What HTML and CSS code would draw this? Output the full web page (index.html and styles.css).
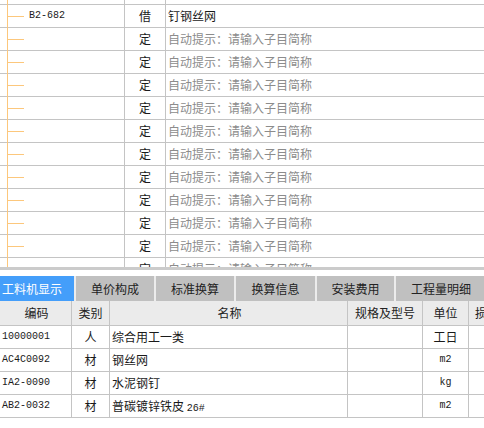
FILE: index.html
```html
<!DOCTYPE html>
<html lang="zh-CN">
  <head>
    <meta charset="UTF-8" />
    <title>工料机显示</title>
    <link rel="stylesheet" href="styles.css">
  </head>
  <body>
    <div class="tree-grid">
      <div class="tree-line"></div>
      <div class="rows">
        <div class="row">
          <div class="c-code"></div>
          <div class="c-type"></div>
          <div class="c-name"></div>
        </div>
        <div class="row">
          <div class="c-code"><span class="branch"></span><span class="mono">B2-682</span></div>
          <div class="c-type">借</div>
          <div class="c-name">钉钢丝网</div>
        </div>
        <div class="row">
          <div class="c-code"><span class="branch"></span></div>
          <div class="c-type">定</div>
          <div class="c-name hint">自动提示：请输入子目简称</div>
        </div>
        <div class="row">
          <div class="c-code"><span class="branch"></span></div>
          <div class="c-type">定</div>
          <div class="c-name hint">自动提示：请输入子目简称</div>
        </div>
        <div class="row">
          <div class="c-code"><span class="branch"></span></div>
          <div class="c-type">定</div>
          <div class="c-name hint">自动提示：请输入子目简称</div>
        </div>
        <div class="row">
          <div class="c-code"><span class="branch"></span></div>
          <div class="c-type">定</div>
          <div class="c-name hint">自动提示：请输入子目简称</div>
        </div>
        <div class="row">
          <div class="c-code"><span class="branch"></span></div>
          <div class="c-type">定</div>
          <div class="c-name hint">自动提示：请输入子目简称</div>
        </div>
        <div class="row">
          <div class="c-code"><span class="branch"></span></div>
          <div class="c-type">定</div>
          <div class="c-name hint">自动提示：请输入子目简称</div>
        </div>
        <div class="row">
          <div class="c-code"><span class="branch"></span></div>
          <div class="c-type">定</div>
          <div class="c-name hint">自动提示：请输入子目简称</div>
        </div>
        <div class="row">
          <div class="c-code"><span class="branch"></span></div>
          <div class="c-type">定</div>
          <div class="c-name hint">自动提示：请输入子目简称</div>
        </div>
        <div class="row">
          <div class="c-code"><span class="branch"></span></div>
          <div class="c-type">定</div>
          <div class="c-name hint">自动提示：请输入子目简称</div>
        </div>
        <div class="row">
          <div class="c-code"><span class="branch"></span></div>
          <div class="c-type">定</div>
          <div class="c-name hint">自动提示：请输入子目简称</div>
        </div>
        <div class="row">
          <div class="c-code"><span class="branch"></span></div>
          <div class="c-type">定</div>
          <div class="c-name hint">自动提示：请输入子目简称</div>
        </div>
      </div>
    </div>

    <div class="splitter"></div>

    <div class="tabs">
      <div class="tab active">工料机显示</div>
      <div class="tab w78">单价构成</div>
      <div class="tab w78">标准换算</div>
      <div class="tab w79">换算信息</div>
      <div class="tab w77">安装费用</div>
      <div class="tab last">工程量明细</div>
    </div>

    <div class="res-grid">
      <div class="res-row head">
        <div class="col-code">编码</div>
        <div class="col-cat">类别</div>
        <div class="col-name">名称</div>
        <div class="col-spec">规格及型号</div>
        <div class="col-unit">单位</div>
        <div class="col-loss">损耗率</div>
      </div>
      <div class="res-row">
        <div class="col-code mono">10000001</div>
        <div class="col-cat">人</div>
        <div class="col-name">综合用工一类</div>
        <div class="col-spec"></div>
        <div class="col-unit">工日</div>
        <div class="col-loss"></div>
      </div>
      <div class="res-row">
        <div class="col-code mono">AC4C0092</div>
        <div class="col-cat">材</div>
        <div class="col-name">钢丝网</div>
        <div class="col-spec"></div>
        <div class="col-unit mono">m2</div>
        <div class="col-loss"></div>
      </div>
      <div class="res-row">
        <div class="col-code mono">IA2-0090</div>
        <div class="col-cat">材</div>
        <div class="col-name">水泥钢钉</div>
        <div class="col-spec"></div>
        <div class="col-unit mono">kg</div>
        <div class="col-loss"></div>
      </div>
      <div class="res-row">
        <div class="col-code mono">AB2-0032</div>
        <div class="col-cat">材</div>
        <div class="col-name">普碳镀锌铁皮 <span class="mono">26#</span></div>
        <div class="col-spec"></div>
        <div class="col-unit mono">m2</div>
        <div class="col-loss"></div>
      </div>
    </div>
  </body>
</html>
```

FILE: styles.css
```css
body {
  margin: 0;
  width: 484px;
  height: 428px;
  overflow: hidden;
  background-color: #fff;
  font-family: "Noto Sans CJK SC", "Liberation Sans", sans-serif;
  font-size: 12px;
  color: #1a1a1a;
}

.mono {
  font-family: "Liberation Mono", "DejaVu Sans Mono", monospace;
  font-size: 10px;
}

/* upper tree grid */
.tree-grid {
  position: relative;
  height: 267px;
  overflow: hidden;
}

.tree-line {
  position: absolute;
  left: 7px;
  top: 0;
  width: 1px;
  height: 100%;
  background-color: #fcc77c;
}

.rows {
  margin-top: -18px;
}

.row {
  display: grid;
  grid-template-columns: 125px 41px 1fr;
  height: 22px;
  line-height: 22px;
  border-bottom: 1px solid #c4c4c4;
}

.c-code {
  display: flex;
  align-items: center;
  border-right: 1px solid #c4c4c4;
}

.branch {
  display: block;
  width: 16px;
  height: 1px;
  margin-left: 8px;
  margin-right: 5px;
  background-color: #fcc77c;
}

.c-type {
  text-align: center;
  border-right: 1px solid #c4c4c4;
}

.c-name {
  padding-left: 2px;
  white-space: nowrap;
}

.hint {
  color: #8c8c8c;
}

.splitter {
  height: 3px;
  background-color: #cbcbcb;
  margin-bottom: 6px;
}

/* tab strip */
.tabs {
  display: flex;
  gap: 2px;
  height: 25px;
  background-color: #ececec;
  white-space: nowrap;
}

.tab {
  flex: none;
  line-height: 25px;
  text-align: center;
  background-color: #c0c0c0;
  color: #222;
}

.tab.active {
  width: 74px;
  padding-left: 2px;
  box-sizing: border-box;
  text-align: left;
  background-color: #449efa;
  color: #fff;
}

.tab.w78 { width: 78px; }
.tab.w79 { width: 79px; }
.tab.w77 { width: 77px; }
.tab.last { width: 90px; }

/* resource grid */
.res-row {
  display: grid;
  grid-template-columns: 72px 38px 238px 75px 46px 60px;
  height: 22px;
  line-height: 22px;
  border-bottom: 1px solid #c4c4c4;
  white-space: nowrap;
}

.res-row.head {
  height: 24px;
  line-height: 24px;
  background-color: #ebebeb;
  color: #222;
}

.res-row > div {
  border-right: 1px solid #c4c4c4;
  overflow: hidden;
}

.res-row.head > div {
  text-align: center;
}

.col-code {
  padding-left: 2px;
}

.col-cat,
.col-unit {
  text-align: center;
}

.col-name {
  padding-left: 2px;
}

.res-row.head .col-loss {
  text-align: left;
  padding-left: 6px;
}
```
